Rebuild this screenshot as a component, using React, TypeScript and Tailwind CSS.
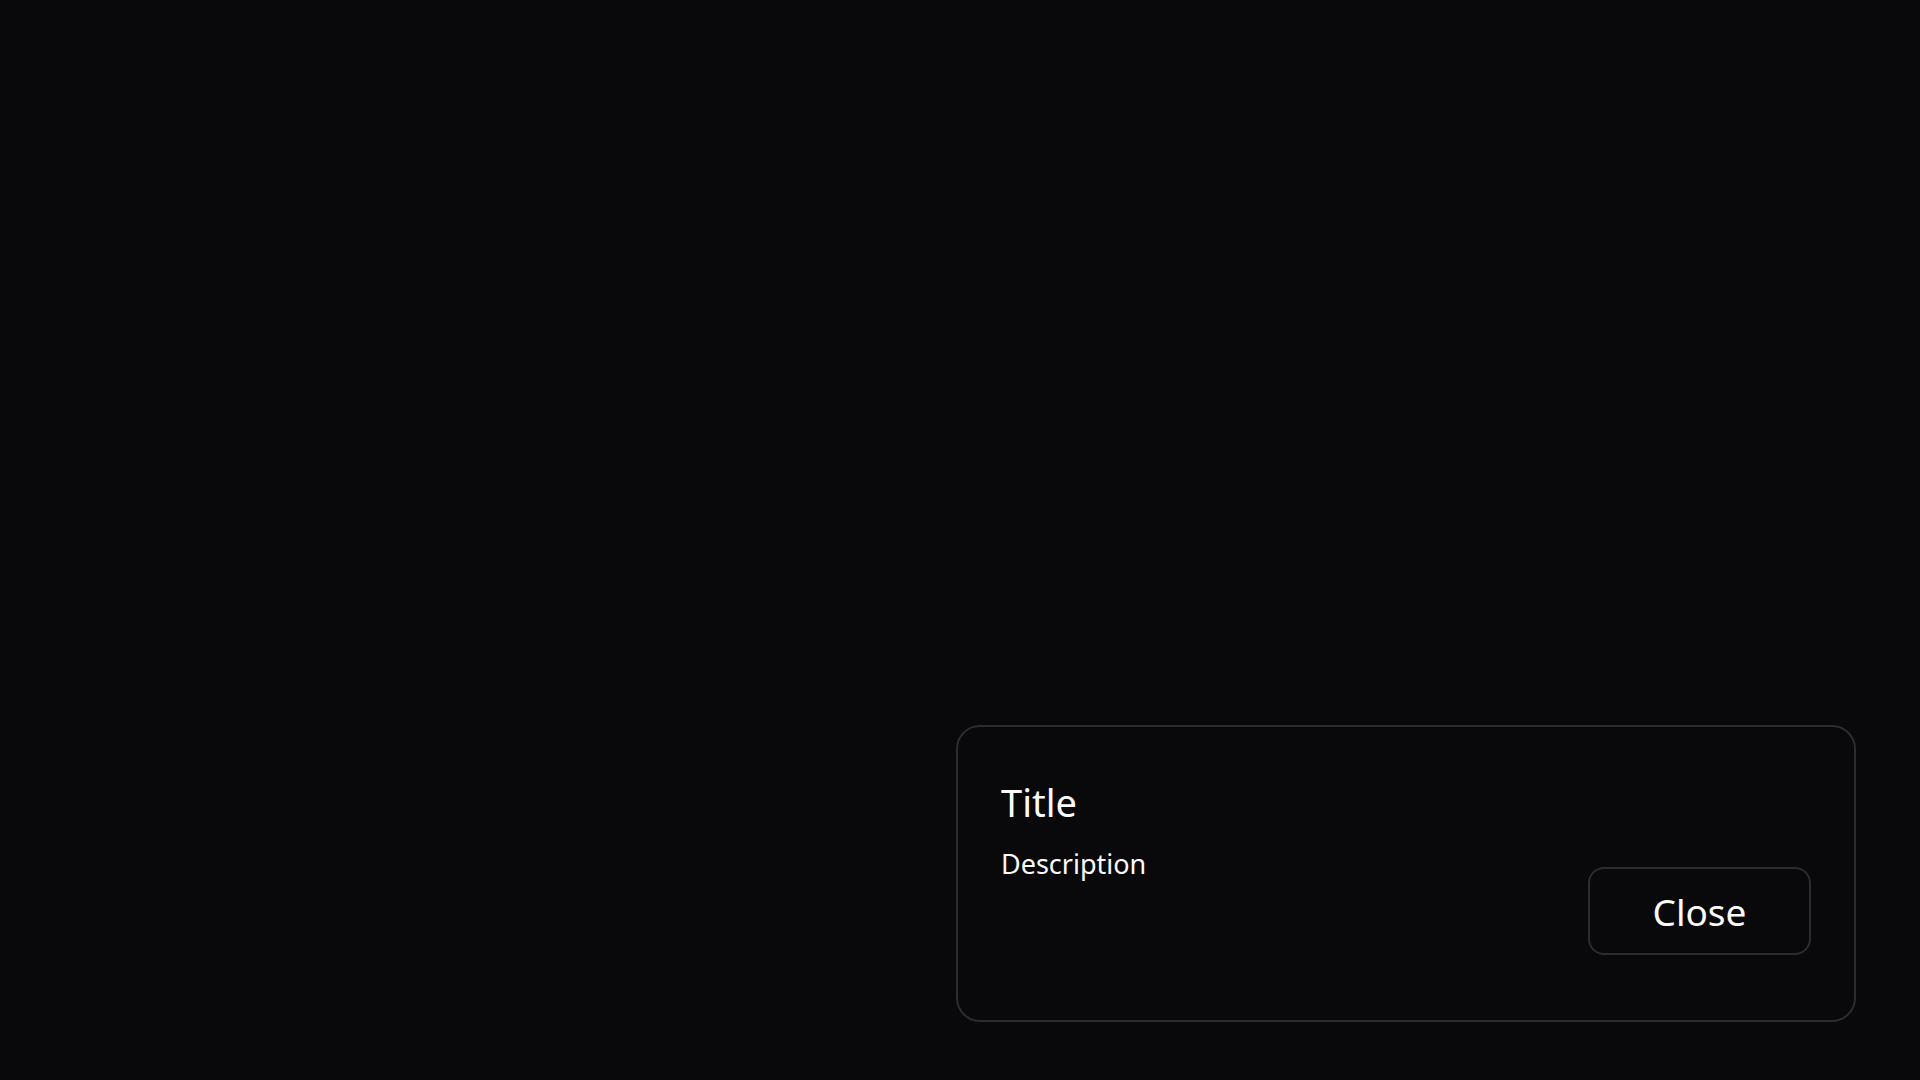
export default function App() {
  return (
    <div
      className="flex h-screen w-full items-end justify-end bg-[#09090b] pr-[64px] pb-[58px] text-[#fafafa]"
      style={{ fontFamily: '"Noto Sans", "Open Sans", sans-serif' }}
    >
      <div className="flex h-[297px] w-[900px] justify-between rounded-[24px] border-2 border-[#2c2c30] bg-[#09090b] px-[43px]">
        <div className="flex flex-col pt-[56px]">
          <h2 className="text-[38px] leading-none font-normal">Title</h2>
          <p className="mt-[29px] text-[27px] leading-none">Description</p>
        </div>
        <button
          type="button"
          className="mb-[65px] flex h-[88px] w-[223px] items-center justify-center self-end rounded-[16px] border-2 border-[#2c2c30] bg-[#09090b] text-[37px] leading-none"
        >
          Close
        </button>
      </div>
    </div>
  );
}
